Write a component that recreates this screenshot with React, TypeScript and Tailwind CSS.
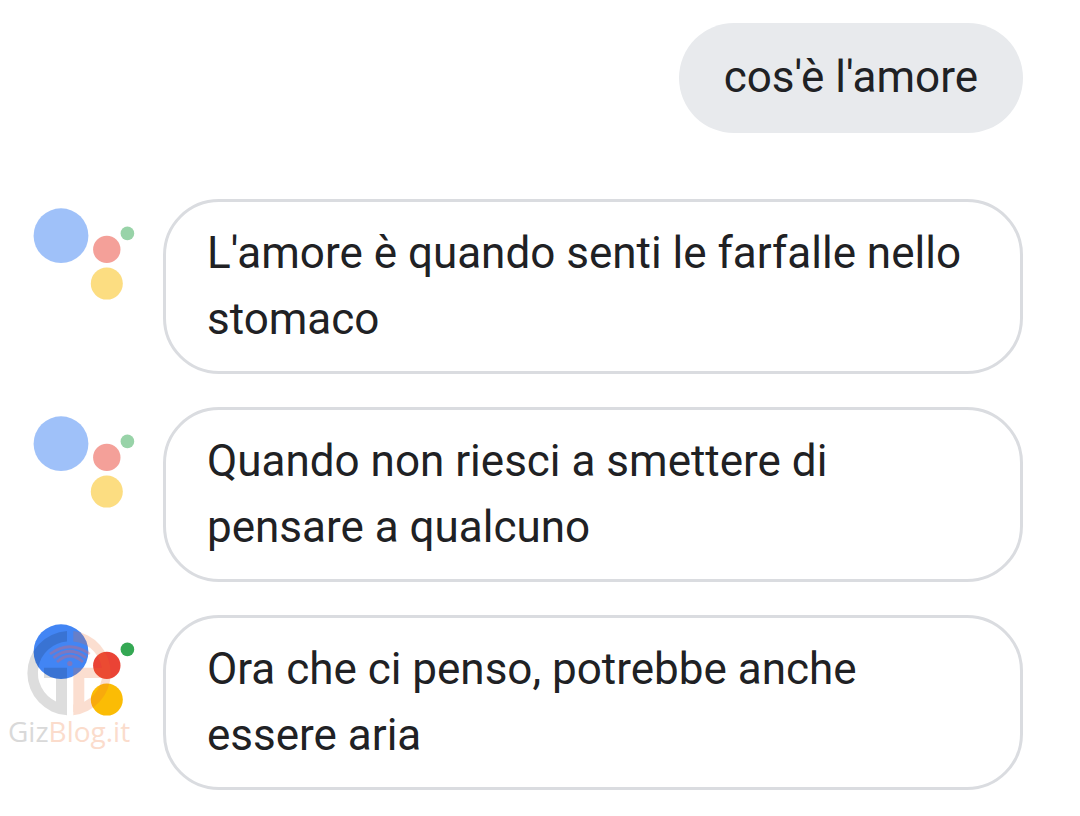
const replies = [
  { text: "L'amore è quando senti le farfalle nello stomaco", active: false },
  { text: "Quando non riesci a smettere di pensare a qualcuno", active: false },
  { text: "Ora che ci penso, potrebbe anche essere aria", active: true },
];

function AssistantDots({ active }: { active: boolean }) {
  return (
    <svg
      width="102"
      height="104"
      viewBox="0 0 102 104"
      className={active ? "shrink-0" : "shrink-0 opacity-50"}
      aria-hidden="true"
    >
      <circle cx="28" cy="36.7" r="27.4" fill="#4285f4" />
      <circle cx="73.8" cy="50.4" r="13.7" fill="#ea4335" />
      <circle cx="73.8" cy="84.6" r="16" fill="#fbbc05" />
      <circle cx="94.4" cy="34.4" r="6.8" fill="#34a853" />
    </svg>
  );
}

function Watermark() {
  return (
    <svg
      width="150"
      height="140"
      viewBox="0 0 150 140"
      className="pointer-events-none absolute left-0 top-0"
    >
      <path
        d="M67 16A42.23 42.23 0 0 0 67 100.3V52.7H44V63H56V86.4A31.5 31.5 0 0 1 67 26.5Z"
        fill="#000"
        opacity="0.135"
      />
      <g fill="#f06a28" opacity="0.21">
        <path d="M73.3 16A42.45 42.45 0 0 1 73.3 100.3V89.5A31.6 31.6 0 0 0 73.3 26.5Z" />
        <path d="M73.3 52.7H104V63H84.3V97H73.3Z" />
      </g>
      <g fill="none" stroke="#f0605a" strokeWidth="2.7" opacity="0.34">
        <path d="M50 39Q69.8 24.5 89.7 39" />
        <path d="M53.5 43Q69.8 29.5 86 43" />
        <path d="M57 47Q69.8 35 83 47" />
        <circle cx="69.8" cy="48.5" r="2.6" fill="#f0605a" stroke="none" />
      </g>
      <text
        x="8"
        y="127"
        className="font-['Open_Sans',sans-serif] text-[28px]"
        fill="#d9d9d9"
      >
        Giz<tspan fill="#fbdccc">Blog.it</tspan>
      </text>
    </svg>
  );
}

export default function App() {
  return (
    <main className="min-h-screen bg-white pt-[23px] pr-[57px] pb-[26px] font-[Roboto,sans-serif] text-[44px] leading-[66px] text-[#202124]">
      <div className="flex justify-end">
        <p className="rounded-[56px] bg-[#e8eaed] px-[45px] pt-[21px] pb-[23px]">cos'è l'amore</p>
      </div>
      <div className="mt-[66px] flex flex-col gap-[33px]">
        {replies.map((reply) => (
          <div key={reply.text} className="relative flex items-start gap-7 pl-[33px]">
            <AssistantDots active={reply.active} />
            <p className="min-w-0 flex-1 rounded-[56px] border-3 border-[#dadce0] px-[41px] pt-[18px] pb-[19px]">
              {reply.text}
            </p>
            {reply.active && <Watermark />}
          </div>
        ))}
      </div>
    </main>
  );
}
